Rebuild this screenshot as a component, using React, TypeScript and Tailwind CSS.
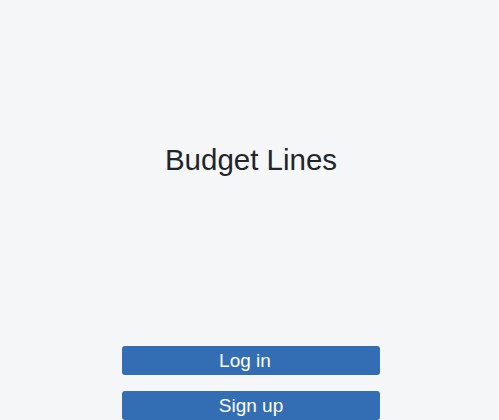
export default function App() {
  return (
    <div className="h-[420px] overflow-hidden bg-[#f5f6f8] pl-[3px] font-['Liberation_Sans',Arial,sans-serif]">
      <div className="flex h-[320px] items-center justify-center">
        <h1 className="text-[29.5px] leading-none text-[#212529]">Budget Lines</h1>
      </div>
      <div className="mx-auto mt-[26px] flex w-[258px] flex-col gap-4">
        <button className="flex h-[29px] items-center justify-center rounded-[3px] bg-[#336eb4] text-[19px] leading-none text-white">
          <span className="pr-3">Log in</span>
        </button>
        <button className="flex h-[29px] items-center justify-center rounded-[3px] bg-[#336eb4] text-[19px] leading-none text-white">
          Sign up
        </button>
      </div>
    </div>
  );
}
